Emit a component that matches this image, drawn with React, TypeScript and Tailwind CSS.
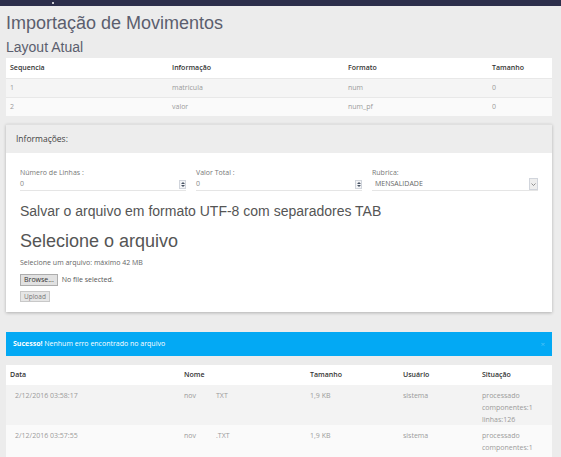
import React from 'react';

const layoutRows = [
  { seq: '1', info: 'matricula', fmt: 'num', size: '0' },
  { seq: '2', info: 'valor', fmt: 'num_pf', size: '0' },
];

const history = [
  { date: '2/12/2016 03:58:17', ext: 'TXT' },
  { date: '2/12/2016 03:57:55', ext: '.TXT' },
];

function Spinner() {
  return (
    <span className="w-[7px] h-[9px] border border-gray-300 bg-gray-100 flex flex-col items-center justify-center gap-[1px]">
      <span className="w-0 h-0 border-l-[2px] border-r-[2px] border-b-[2px] border-l-transparent border-r-transparent border-b-gray-600" />
      <span className="w-0 h-0 border-l-[2px] border-r-[2px] border-t-[2px] border-l-transparent border-r-transparent border-t-gray-600" />
    </span>
  );
}

export default function App() {
  return (
    <div className="w-[561px] h-[457px] overflow-hidden bg-[#ececec] font-['Open_Sans',sans-serif] text-[#777]">
      {/* top bar */}
      <div className="h-[6px] bg-[#2c2e4b] relative">
        <span className="absolute left-[52px] top-[2px] w-[2px] h-[2px] bg-white rounded-full" />
      </div>

      <div className="pl-[6px] pr-[9px]">
        <h1 className="font-['Liberation_Sans',sans-serif] text-[18px] leading-[20px] text-[#5b5e6e] mt-[7px]">
          Importação de Movimentos
        </h1>
        <h2 className="font-['Liberation_Sans',sans-serif] text-[14px] leading-[16px] text-[#5b5e6e] mt-[6px]">
          Layout Atual
        </h2>

        {/* layout table */}
        <div className="mt-[3px] bg-white text-[7px]">
          <div className="grid grid-cols-[162px_176px_144px_1fr] h-[20px] items-center px-[4px] font-semibold text-[#333]">
            <span>Sequencia</span>
            <span>Informação</span>
            <span>Formato</span>
            <span>Tamanho</span>
          </div>
          {layoutRows.map((r, i) => (
            <div
              key={r.seq}
              className={`grid grid-cols-[162px_176px_144px_1fr] h-[19px] items-center px-[4px] text-[#9a9a9a] border-t border-[#e8e8e8] ${i === 0 ? 'bg-[#f5f5f5]' : 'bg-[#fafafa]'}`}
            >
              <span>{r.seq}</span>
              <span>{r.info}</span>
              <span>{r.fmt}</span>
              <span>{r.size}</span>
            </div>
          ))}
        </div>

        {/* Informações panel */}
        <div className="mt-[8px] bg-white shadow-[0_1px_3px_rgba(0,0,0,0.25)]">
          <div className="h-[29px] bg-[#ededed] border-t border-[#e0e0e0] flex items-center px-[10px] text-[8.5px] text-[#444]">
            Informações:
          </div>
          <div className="px-[14px] pt-[15px] pb-[10px]">
            <div className="grid grid-cols-[176px_176px_1fr] text-[7px]">
              <div className="pr-[10px]">
                <div className="text-[#777] h-[10px]">Número de Linhas :</div>
                <div className="h-[13px] flex items-center justify-between border-b border-[#e5e5e5] text-[#888]">
                  <span>0</span>
                  <Spinner />
                </div>
              </div>
              <div className="pr-[10px]">
                <div className="text-[#777] h-[10px]">Valor Total :</div>
                <div className="h-[13px] flex items-center justify-between border-b border-[#e5e5e5] text-[#888]">
                  <span>0</span>
                  <Spinner />
                </div>
              </div>
              <div>
                <div className="text-[#777] h-[10px]">Rubrica:</div>
                <div className="h-[13px] flex items-center justify-between border-b border-[#e5e5e5] text-[#666] pl-[3px]">
                  <span>MENSALIDADE</span>
                  <span className="w-[9px] h-[12px] border border-gray-300 bg-[#eee] flex items-center justify-center">
                    <svg width="5" height="3" viewBox="0 0 5 3"><path d="M0.5 0.5 L2.5 2.5 L4.5 0.5" stroke="#777" fill="none" strokeWidth="0.8" /></svg>
                  </span>
                </div>
              </div>
            </div>

            <div className="mt-[12px] font-['Liberation_Sans',sans-serif] text-[14px] leading-[16px] text-[#555]">
              Salvar o arquivo em formato UTF-8 com separadores TAB
            </div>
            <div className="mt-[11px] font-['Liberation_Sans',sans-serif] text-[18px] leading-[22px] text-[#555]">
              Selecione o arquivo
            </div>
            <div className="mt-[6px] text-[7px] leading-[10px] text-[#666]">Selecione um arquivo: máximo 42 MB</div>
            <div className="mt-[6px] flex items-center gap-[4px] text-[7px] text-[#555]">
              <span className="px-[3px] h-[12px] flex items-center border border-[#adadad] bg-[#e1e1e1] text-[#333]">Browse...</span>
              <span>No file selected.</span>
            </div>
            <div className="mt-[5px] flex">
              <span className="px-[3px] h-[11px] flex items-center border border-[#c8c8c8] bg-[#e6e6e6] text-[6.5px] text-[#777]">Upload</span>
            </div>
          </div>
        </div>

        {/* alert */}
        <div className="mt-[20px] h-[24px] bg-[#03a9f4] flex items-center justify-between px-[7px] text-[7px] text-white">
          <span>
            <b className="font-bold">Sucesso!</b> Nenhum erro encontrado no arquivo
          </span>
          <span className="text-[#4fc3f7] text-[8px]">×</span>
        </div>

        {/* history table */}
        <div className="mt-[9px] bg-white text-[7px]">
          <div className="grid grid-cols-[174px_126px_93px_79px_1fr] h-[20px] items-center px-[4px] font-semibold text-[#333]">
            <span>Data</span>
            <span>Nome</span>
            <span>Tamanho</span>
            <span>Usuário</span>
            <span>Situação</span>
          </div>
          {history.map((h, i) => (
            <div
              key={h.date}
              className={`grid grid-cols-[174px_126px_93px_79px_1fr] h-[40px] pt-[5px] px-[4px] text-[#9a9a9a] leading-[12px] ${i === 0 ? 'bg-[#f3f3f3]' : 'bg-[#fafafa]'}`}
            >
              <span className="pl-[5px]">{h.date}</span>
              <span className="flex">
                <span className="w-[32px]">nov</span>
                <span>{h.ext}</span>
              </span>
              <span>1,9 KB</span>
              <span>sistema</span>
              <span>
                processado
                <br />
                componentes:1
                <br />
                linhas:126
              </span>
            </div>
          ))}
        </div>
      </div>
    </div>
  );
}
